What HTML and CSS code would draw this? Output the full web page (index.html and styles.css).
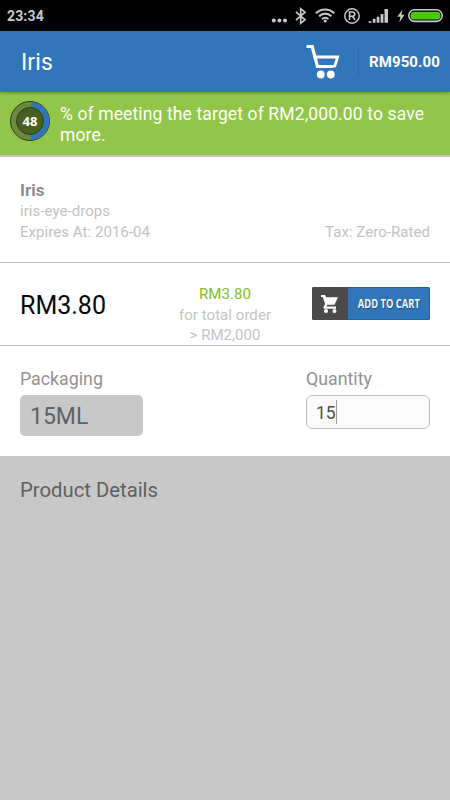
FILE: index.html
```html
<!DOCTYPE html>
<html lang="en">
<head>
<meta charset="utf-8">
<title>Iris</title>
<link rel="stylesheet" href="styles.css">
</head>
<body>
<div class="status">
  <span class="clock">23:34</span>
  <svg class="status-icons" width="180" height="31" viewBox="0 0 180 31" fill="none" stroke="#c9c9c9">
    <g fill="#c9c9c9" stroke="none"><circle cx="3.800" cy="20.500" r="2"/><circle cx="9.400" cy="20.500" r="2"/><circle cx="15" cy="20.500" r="2"/></g>
    <path d="M26 11.800l9 8-4.300 3.400V8.800l4.300 3.400-9 8" stroke-width="1.700"/>
    <path d="M46 13.200c5.400-5 13-5 18.400 0M49 16.200c3.800-3.200 8.600-3.200 12.400 0M51.900 19c2.200-1.700 4.400-1.700 6.600 0" stroke-width="2"/>
    <circle cx="55.200" cy="21" r="1.600" fill="#c9c9c9" stroke="none"/>
    <circle cx="82" cy="16" r="7.200" stroke-width="1.500"/>
    <path d="M79.500 20v-8h3c3 0 3 4.200 0 4.200h-3m3 0l2.500 3.800" stroke-width="1.600"/>
    <path d="M98.500 22.800v-1.600h3v1.600zm4.300 0v-4h2.700v4zm3.900 0v-6h2.700v6zm3.900 0v-8.800h2.800v8.800zm3.900 0V9h3.500v13.800z" fill="#c9c9c9" stroke="none"/>
    <path d="M132.500 9.500l-5.200 7.300h3.200l-1.200 5.700 5.300-7.700h-3.200z" fill="#c9c9c9" stroke="none"/>
    <rect x="138.800" y="9.800" width="33.400" height="11.600" rx="5.800" stroke-width="1.600"/>
    <rect x="140.500" y="11.800" width="30" height="7.800" rx="3.900" fill="#4cc80a" stroke="none"/>
  </svg>
</div>
<header class="bar">
  <h1 class="title">Iris</h1>
  <svg class="cart" width="36" height="36" viewBox="0 0 36 36" fill="none" stroke="#fff">
    <path d="M1.500 2.500h5.700l5.300 20h16.200" stroke-width="3.200"/>
    <path d="M8.500 13h24.200l-3.200 10" stroke-width="2.800"/>
    <circle cx="15.800" cy="30.500" r="3.900" fill="#fff" stroke="none"/><circle cx="25.800" cy="30.500" r="3.900" fill="#fff" stroke="none"/>
  </svg>
  <span class="total">RM950.00</span>
</header>
<section class="banner">
  <svg class="ring" width="40" height="40" viewBox="0 0 40 40">
    <circle cx="20" cy="20" r="19.500" fill="#6c8a42" stroke="#303d1d"/>
    <path d="M21 4A16 16 0 1 1 20.500 36" fill="none" stroke="#3176b8" stroke-width="5.500"/>
    <circle cx="20" cy="20" r="13.500" fill="#46601f" stroke="#303d1d"/>
    <text class="percent" x="20" y="25" text-anchor="middle">48</text>
  </svg>
  <p class="message">% of meeting the target of RM2,000.00 to save<br>more.</p>
</section>
<section class="info">
  <h2 class="name">Iris</h2>
  <div>iris-eye-drops</div>
  <div class="row"><span>Expires At: 2016-04</span><span>Tax: Zero-Rated</span></div>
</section>
<section class="pricing">
  <div class="price">RM3.80</div>
  <div class="deal"><div class="deal-price">RM3.80</div><div>for total order</div><div>&gt; RM2,000</div></div>
  <button class="add">
    <span class="add-icon"><svg width="20" height="20" viewBox="0 0 20 20" fill="#fff"><path d="M1 1h4l1.200 2.300H18l-3.500 7.500H7.200l-.8 1.700H16v2.200H5c-1.800 0-2-1-1.200-2.300l1.300-2.500L2.800 3H1z"/><circle cx="6" cy="17" r="2"/><circle cx="14.500" cy="17" r="2"/></svg></span>
    <span class="add-label"><span class="add-text">ADD TO CART</span></span>
  </button>
</section>
<section class="options">
  <div class="packaging"><div class="label">Packaging</div><div class="pack-value">15ML</div></div>
  <div class="quantity"><div class="label">Quantity</div><div class="quantity-value"><span>15</span><i class="caret"></i></div></div>
</section>
<section class="details"><h2 class="details-title">Product Details</h2></section>
</body>
</html>
```
FILE: styles.css
```css
* { box-sizing: border-box; }
body { margin: 0; width: 450px; height: 800px; overflow: hidden; display: flex; flex-direction: column; background: #fff; font-family: Roboto, sans-serif; }
h1, h2, p { margin: 0; font-weight: 400; }
svg { display: block; flex: none; }
.status { height: 31px; flex: none; background: #000; display: flex; justify-content: space-between; }
.clock { padding-left: 7px; color: #c9c9c9; font-size: 14px; line-height: 32px; font-weight: 700; letter-spacing: .15px; }
.bar { height: 61px; flex: none; display: flex; align-items: center; background: #3176b8; color: #fff; padding: 0 10px 0 21px; position: relative; box-shadow: 0 1px 3px rgba(0,0,0,.3); }
.title { flex: 1; font-size: 23px; letter-spacing: .1px; padding-top: 1px; }
.cart { margin-right: 17px; }
.total { height: 30px; border-left: 1px solid #296aa9; padding-left: 10px; line-height: 31px; font-size: 15px; font-weight: 700; letter-spacing: .1px; width: 82px; white-space: nowrap; }
.banner { height: 65px; flex: none; background: #92c64a; border-bottom: 2px solid #bdc3b7; display: flex; padding: 9px 0 0 10px; }
.percent { fill: #fff; font: 700 13px "Open Sans", sans-serif; }
.message { margin: 3px 0 0 10px; color: #fff; font-size: 17.500px; line-height: 20.500px; letter-spacing: .13px; white-space: nowrap; }
.info { height: 106px; flex: none; padding: 22px 20px 0; border-bottom: 1px solid #bcbcbc; color: #c2c2c2; font-size: 15px; letter-spacing: .05px; line-height: 21px; }
.name { font-size: 17px; line-height: 22px; font-weight: 700; color: #8d8d8d; }
.row { display: flex; justify-content: space-between; }
.pricing { height: 83px; flex: none; padding: 0 20px; border-bottom: 1px solid #bcbcbc; display: flex; justify-content: space-between; }
.price { width: 146px; font-size: 25px; line-height: 85px; color: #050505; white-space: nowrap; }
.deal { width: 118px; color: #c4c4c4; font-size: 15px; line-height: 20.500px; letter-spacing: .05px; text-align: center; padding-top: 21px; white-space: nowrap; }
.deal { margin-right: 28px; }
.add { width: 118px; height: 33px; flex: none; margin: 24px 0 0; padding: 0; border: 0; border-radius: 2px; display: flex; background: #3176b8; box-shadow: inset 0 0 0 1px #1268b0; }
.deal-price { color: #84bd2c; }
.add-icon { width: 36px; height: 33px; flex: none; border-radius: 2px 0 0 2px; background: #4a4a4a; display: flex; justify-content: center; align-items: center; }
.add-label { width: 82px; display: flex; justify-content: center; }
.add-text { flex: none; color: #eef5fb; font: 700 12px/33px "Open Sans", sans-serif; text-shadow: 1px 1px 1px #214e79; transform: scaleX(.78); white-space: nowrap; }
.options { height: 110px; flex: none; display: flex; justify-content: space-between; padding: 22px 20px 0; }
.label { color: #929292; font-size: 17.800px; line-height: 22px; }
.pack-value { width: 123px; height: 41px; margin-top: 5px; padding-left: 10px; border-radius: 5px; background: #c8c8c8; color: #626262; font-size: 23px; line-height: 43px; }
.quantity-value { width: 124px; height: 34px; margin-top: 5px; padding-left: 9px; border: 1px solid #bcbcbc; border-radius: 6px; background: #fafafa; color: #505050; font-size: 17.500px; line-height: 34px; display: flex; }
.caret { width: 1px; height: 24px; margin-top: 4px; background: #999; }
.details { flex: 1; background: #c8c8c8; padding: 22px 20px; }
.details-title { font-size: 20.300px; line-height: 24px; color: #606060; }
```
